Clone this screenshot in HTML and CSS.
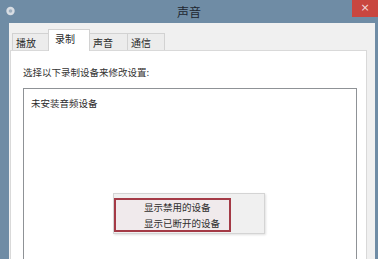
FILE: index.html
```html
<!DOCTYPE html>
<html lang="zh-CN">
<head>
<meta charset="utf-8">
<link rel="stylesheet" href="styles.css">
</head>
<body>
<div class="window">
  <div class="titlebar">
    <svg class="app-icon" width="11" height="10" viewBox="0 0 11 10">
      <circle cx="5.5" cy="5" r="4.2" fill="#d8dde3"/>
      <circle cx="5.5" cy="5" r="1.8" fill="#9fb0c0"/>
    </svg>
    <div class="title">声音</div>
    <div class="close">×</div>
  </div>
  <div class="client">
    <div class="tabs">
      <div class="tab tab-play">播放</div>
      <div class="tab tab-rec active">录制</div>
      <div class="tab tab-sound">声音</div>
      <div class="tab tab-comm">通信</div>
    </div>
    <div class="panel">
      <div class="label">选择以下录制设备来修改设置:</div>
      <div class="listbox">
        <div class="item">未安装音频设备</div>
        <div class="menu">
          <div class="highlight"></div>
          <div class="menu-item">显示禁用的设备</div>
          <div class="menu-item">显示已断开的设备</div>
        </div>
      </div>
    </div>
  </div>
</div>
</body>
</html>
```
FILE: styles.css
```css
html, body {
  margin: 0;
  padding: 0;
}
body {
  width: 378px;
  height: 259px;
  overflow: hidden;
  font-family: "Noto Sans CJK SC", "Noto Sans", sans-serif;
  color: #333;
}
.window {
  width: 378px;
  height: 259px;
  background: #6f8ca5;
  display: flex;
  flex-direction: column;
  overflow: hidden;
}
.titlebar {
  height: 23px;
  flex: none;
  display: flex;
  align-items: flex-start;
  position: relative;
}
.app-icon {
  margin: 6px 0 0 5px;
}
.title {
  position: absolute;
  left: 0;
  right: 0;
  top: 4px;
  text-align: center;
  font-size: 12px;
  line-height: 16px;
  color: #1e2630;
}
.close {
  margin-left: auto;
  width: 26px;
  height: 17px;
  background: #c9463f;
  color: #f4dcdc;
  font-family: "DejaVu Sans", sans-serif;
  font-size: 11px;
  line-height: 16px;
  text-align: center;
  position: relative;
}
.client {
  flex: 1;
  margin: 0 3px 0 9px;
  background: #f0f0f0;
  padding: 7px 8px 0 1px;
  display: flex;
  flex-direction: column;
  min-height: 0;
}
.tabs {
  display: flex;
  align-items: flex-end;
  height: 20px;
  padding-left: 2px;
  position: relative;
  z-index: 1;
}
.tab {
  box-sizing: border-box;
  height: 17px;
  border: 1px solid #d2d2d2;
  border-bottom: none;
  background: #ececec;
  font-size: 10px;
  line-height: 17px;
  padding: 0 0 0 3px;
  margin-right: -1px;
  color: #2a2a2a;
}
.tab-play { width: 37px; }
.tab-rec { width: 42px; }
.tab-sound { width: 39px; }
.tab-comm { width: 38px; }
.tab.active {
  height: 22px;
  margin-bottom: -1px;
  background: #fff;
  padding-left: 6px;
  line-height: 18px;
  position: relative;
  z-index: 2;
}
.panel {
  flex: 1;
  background: #fff;
  border: 1px solid #d9d9d9;
  border-bottom: none;
  padding: 15px 9px 0 12px;
  display: flex;
  flex-direction: column;
  min-height: 0;
}
.label {
  font-size: 9.5px;
  line-height: 12px;
  height: 12px;
  margin-bottom: 10px;
  color: #333;
  white-space: nowrap;
}
.listbox {
  flex: 1;
  border: 1px solid #8f9296;
  border-bottom: none;
  position: relative;
  padding: 8px 7px 0;
}
.item {
  font-size: 9.5px;
  line-height: 12px;
  color: #2b2b2b;
}
.menu {
  position: absolute;
  left: 89px;
  top: 104px;
  width: 152px;
  height: 41px;
  box-sizing: border-box;
  background: #f0f0f0;
  border: 1px solid #d4d4d4;
  box-shadow: 1px 1px 2px rgba(0, 0, 0, 0.12);
  padding: 5px 0 0 30px;
}
.highlight {
  position: absolute;
  left: 0;
  top: 4px;
  width: 117px;
  height: 34px;
  box-sizing: border-box;
  border: 2px solid #a43a46;
  background: rgba(240, 215, 222, 0.25);
}
.menu-item {
  position: relative;
  font-size: 9.5px;
  line-height: 16px;
  height: 16px;
  color: #2e2e2e;
  white-space: nowrap;
}
```
